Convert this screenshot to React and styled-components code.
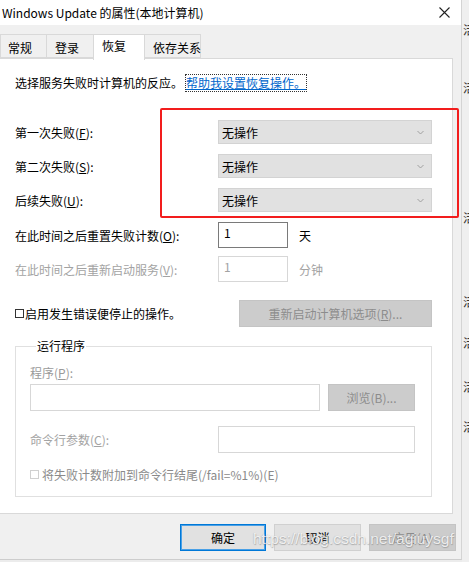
import React from 'react';
import styled, { createGlobalStyle } from "styled-components";

const Global = createGlobalStyle`
	html, body {
		margin: 0;
		padding: 0;
		background: #ececec;
	}
	body {
		font-family: "Noto Sans CJK SC", "Liberation Sans", sans-serif;
		font-size: 12px;
		color: #000;
	}
`;

const Page = styled.div`
	display: flex;
	width: 469px;
	height: 562px;
	overflow: hidden;
`;

const Dialog = styled.div`
	position: relative;
	width: 461px;
	height: 559px;
	flex-shrink: 0;
	background: #f0f0f0;
	border-right: 1px solid #d4d4d4;
	border-bottom: 1px solid #cdcdcd;
	display: flex;
	flex-direction: column;
`;

const TitleBar = styled.div`
	height: 25px;
	background: #fff;
	display: flex;
	align-items: center;
	justify-content: space-between;
	padding: 0 11px 0 2px;
	font-size: 12px;
	line-height: 25px;
`;

const Body = styled.div`
	padding-top: 9px;
`;

const TabRow = styled.div`
	display: flex;
	align-items: flex-end;
	height: 24px;
	position: relative;
	z-index: 1;
`;

const Tab = styled.div`
	box-sizing: border-box;
	width: ${(p) => p.w}px;
	height: ${(p) => (p.active ? 26 : 24)}px;
	margin-bottom: ${(p) => (p.active ? -2 : 0)}px;
	padding: ${(p) => (p.active ? "3px" : "5px")} 0 0 ${(p) => p.pl || 8}px;
	line-height: 16px;
	white-space: nowrap;
	background: ${(p) => (p.active ? "#fff" : "#f0f0f0")};
	border: 1px solid #d9d9d9;
	border-bottom: ${(p) => (p.active ? "none" : "1px solid #d9d9d9")};
	margin-right: -1px;
`;

const Panel = styled.div`
	box-sizing: border-box;
	height: 456px;
	margin-right: 8px;
	background: #fff;
	border: 1px solid #d9d9d9;
	border-left: none;
	padding-left: 15px;
`;

const Intro = styled.div`
	margin-top: 15px;
	height: 18px;
	line-height: 18px;
	display: flex;
	align-items: center;
`;

const HelpLink = styled.span`
	color: #0066cc;
	text-decoration: underline;
	outline: 1px dotted #333;
	outline-offset: 0;
	margin-left: 3px;
	line-height: 16px;
`;

const Form = styled.div`
	margin-top: 28px;
`;

const Row = styled.div`
	display: flex;
	align-items: center;
	height: ${(p) => p.h}px;
	margin-bottom: ${(p) => p.gap || 0}px;
`;

const Label = styled.div`
	width: ${(p) => p.w || 203}px;
	flex-shrink: 0;
	color: ${(p) => (p.disabled ? "#a3a3a3" : "#000")};
	white-space: nowrap;
`;

const Select = styled.div`
	box-sizing: border-box;
	width: 214px;
	height: 24px;
	background: #e1e1e1;
	border: 1px solid #d3d3d3;
	display: flex;
	align-items: center;
	justify-content: space-between;
	padding: 0 7px 0 3px;
`;

const TextBox = styled.div`
	box-sizing: border-box;
	width: ${(p) => p.w || 70}px;
	height: ${(p) => p.h || 26}px;
	border: 1px solid ${(p) => (p.disabled ? "#d7d7d7" : "#7a7a7a")};
	color: ${(p) => (p.disabled ? "#a3a3a3" : "#000")};
	padding: 1px 0 0 5px;
	line-height: 18px;
	background: #fff;
`;

const Unit = styled.span`
	margin-left: 11px;
	color: ${(p) => (p.disabled ? "#a3a3a3" : "#000")};
`;

const CheckLabel = styled.div`
	width: 224px;
	display: flex;
	align-items: center;
	color: ${(p) => (p.disabled ? "#8a8a8a" : "#000")};
	white-space: nowrap;
`;

const Box = styled.span`
	box-sizing: border-box;
	width: 9px;
	height: 9px;
	border: 1px solid ${(p) => (p.disabled ? "#d0d0d0" : "#333")};
	margin-right: ${(p) => (p.disabled ? 3 : 1)}px;
	flex-shrink: 0;
`;

const Button = styled.div`
	box-sizing: border-box;
	width: ${(p) => p.w}px;
	height: 27px;
	display: flex;
	align-items: center;
	justify-content: center;
	background: ${(p) => (p.disabled ? "#cccccc" : "#e1e1e1")};
	color: ${(p) => (p.disabled ? "#8c8c8c" : "#000")};
	border: 1px solid ${(p) => (p.primary ? "#0078d7" : p.disabled ? "#c4c4c4" : "#d0d0d0")};
	box-shadow: ${(p) => (p.primary ? "inset 0 0 0 1px #4aa0e6" : "none")};
	flex-shrink: 0;
`;

const Group = styled.fieldset`
	box-sizing: border-box;
	width: 417px;
	height: 158px;
	margin: 12px 0 0 0;
	padding: 11px 16px 0 14px;
	border: 1px solid #e0e0e0;
	min-width: 0;
`;

const Legend = styled.legend`
	margin-left: 6px;
	padding: 0 1px;
	line-height: 14px;
`;

const ProgramLabel = styled.div`
	height: 18px;
	line-height: 18px;
	color: #9a9a9a;
`;

const GroupRow = styled.div`
	display: flex;
	align-items: center;
	justify-content: space-between;
	margin-top: ${(p) => p.mt}px;
	height: ${(p) => p.h}px;
`;

const Footer = styled.div`
	display: flex;
	justify-content: flex-end;
	gap: 8px;
	margin-top: 10px;
	padding-right: 5px;
`;

const Annotation = styled.div`
	position: absolute;
	left: 160px;
	top: 108px;
	width: 299px;
	height: 110px;
	box-sizing: border-box;
	border: 2px solid #f21d1d;
	border-radius: 2px;
	pointer-events: none;
`;

const Watermark = styled.div`
	position: absolute;
	left: 253px;
	top: 530px;
	font-family: "Liberation Sans", Arial, sans-serif;
	font-size: 15.5px;
	color: rgba(255, 255, 255, 0.8);
	text-shadow: 0.5px 0.5px 1px rgba(110, 110, 110, 0.45), -0.5px -0.5px 1px rgba(110, 110, 110, 0.3);
	white-space: nowrap;
	pointer-events: none;
`;

const Strip = styled.div`
	flex: 1;
	background: #efefef;
	overflow: hidden;
	display: flex;
	flex-direction: column;
	font-size: 12px;
	color: #333;
`;

const StripChar = styled.div`
	margin-top: ${(p) => p.mt}px;
	height: 14px;
	line-height: 14px;
	margin-left: 1px;
	white-space: nowrap;
`;

const Close = () => (
	<svg width="11" height="11" viewBox="0 0 11 11">
		<path d="M0.5 0.5 L10.5 10.5 M10.5 0.5 L0.5 10.5" stroke="#222" strokeWidth="1.1" fill="none" />
	</svg>
);

const Chevron = () => (
	<svg width="7" height="5" viewBox="0 0 7 5">
		<path d="M0.5 1 L3.5 4 L6.5 1" stroke="#9a9a9a" strokeWidth="0.9" fill="none" />
	</svg>
);

const failRows = [
	{ label: "第一次失败(", key: "F" },
	{ label: "第二次失败(", key: "S" },
	{ label: "后续失败(", key: "U" },
];

const stripMarks = [23, 44, 116, 70, 27, 30, 26];

const App = () => {
	return (
		<Page>
			<Global />
			<Dialog>
				<TitleBar>
					<span>Windows Update 的属性(本地计算机)</span>
					<Close />
				</TitleBar>
				<Body>
					<TabRow>
						<Tab w={47} pl={7}>常规</Tab>
						<Tab w={48}>登录</Tab>
						<Tab w={52} active>恢复</Tab>
						<Tab w={57}>依存关系</Tab>
					</TabRow>
					<Panel>
						<Intro>
							选择服务失败时计算机的反应。
							<HelpLink>帮助我设置恢复操作。</HelpLink>
						</Intro>
						<Form>
							{failRows.map((r) => (
								<Row h={24} gap={10} key={r.key}>
									<Label>
										{r.label}
										<u>{r.key}</u>):
									</Label>
									<Select>
										<span>无操作</span>
										<Chevron />
									</Select>
								</Row>
							))}
							<Row h={26} gap={8}>
								<Label>
									在此时间之后重置失败计数(<u>O</u>):
								</Label>
								<TextBox>1</TextBox>
								<Unit>天</Unit>
							</Row>
							<Row h={26} gap={18}>
								<Label disabled>
									在此时间之后重新启动服务(<u>V</u>):
								</Label>
								<TextBox disabled>1</TextBox>
								<Unit disabled>分钟</Unit>
							</Row>
							<Row h={27}>
								<CheckLabel>
									<Box />
									启用发生错误便停止的操作。
								</CheckLabel>
								<Button w={193} disabled>
									重新启动计算机选项(<u>R</u>)...
								</Button>
							</Row>
						</Form>
						<Group>
							<Legend>运行程序</Legend>
							<ProgramLabel>
								程序(<u>P</u>):
							</ProgramLabel>
							<GroupRow mt={2} h={27}>
								<TextBox w={290} h={27} disabled />
								<Button w={87} disabled>
									浏览(B)...
								</Button>
							</GroupRow>
							<GroupRow mt={15} h={27}>
								<Label w={188} disabled>
									命令行参数(<u>C</u>):
								</Label>
								<TextBox w={198} h={27} disabled />
							</GroupRow>
							<GroupRow mt={12} h={18}>
								<CheckLabel disabled>
									<Box disabled />
									将失败计数附加到命令行结尾(/fail=%1%)(E)
								</CheckLabel>
							</GroupRow>
						</Group>
					</Panel>
					<Footer>
						<Button w={86} primary>确定</Button>
						<Button w={87}>取消</Button>
						<Button w={87} disabled>应用(A)</Button>
					</Footer>
				</Body>
				<Annotation />
				<Watermark>https://blog.csdn.net/agiuysgf</Watermark>
			</Dialog>
			<Strip>
				{stripMarks.map((m, i) => (
					<StripChar mt={m} key={i}>活</StripChar>
				))}
			</Strip>
		</Page>
	);
};

export default App;
